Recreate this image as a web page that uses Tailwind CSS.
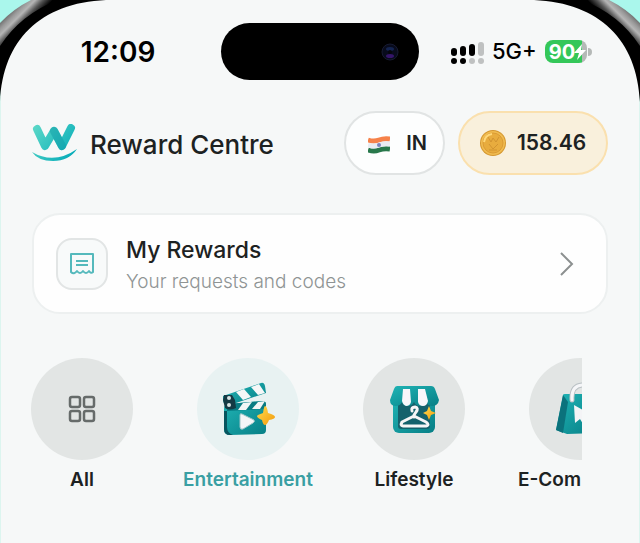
<!DOCTYPE html>
<html lang="en">
  <head>
    <meta charset="UTF-8" />
    <meta name="viewport" content="width=device-width, initial-scale=1.0" />
    <title>Reward Centre</title>
    <script src="https://cdn.jsdelivr.net/npm/@tailwindcss/browser@4"></script>
  </head>
  <body class="bg-[#f6f8f8] font-['Inter',sans-serif] text-[#1d2222]">
    <!-- shared shapes -->
    <svg class="absolute size-0" aria-hidden="true">
      <defs>
        <linearGradient id="metal" gradientUnits="userSpaceOnUse" x1="12" y1="9" x2="28" y2="25">
          <stop offset="0" stop-color="#666" />
          <stop offset=".25" stop-color="#999" />
          <stop offset=".45" stop-color="#b5b5b5" />
          <stop offset=".7" stop-color="#555" />
          <stop offset="1" stop-color="#000" />
        </linearGradient>
        <linearGradient id="teal" x1="0" y1="0" x2="1" y2="1">
          <stop offset="0" stop-color="#20b4b5" />
          <stop offset="1" stop-color="#077f86" />
        </linearGradient>
        <linearGradient id="gold" x1="0" y1="0" x2="1" y2="1">
          <stop offset="0" stop-color="#ffdc4e" />
          <stop offset="1" stop-color="#f29a0c" />
        </linearGradient>
        <g id="corner">
          <path d="M0 0H106C40 3 3 40 0 102Z" fill="#000" />
          <path d="M0 0H58Q21 14 0 46Z" fill="url(#metal)" />
          <path d="M0 0H31Q13 9 0 23Z" fill="#aaf7ec" />
        </g>
      </defs>
    </svg>

    <main class="relative min-h-lvh border-x border-[#dcf5ef]">
      <!-- phone frame corners -->
      <svg class="absolute -left-px top-0" width="106" height="102" aria-hidden="true"><use href="#corner" /></svg>
      <svg class="absolute -right-px top-0 -scale-x-100" width="106" height="102" aria-hidden="true"><use href="#corner" /></svg>

      <!-- status bar -->
      <div class="relative grid grid-cols-[1fr_198px_1fr] items-center pt-[23px]">
        <p class="pl-3.5 text-center text-[28px] leading-8 font-semibold text-black">12:09</p>
        <div class="flex h-[57px] items-center justify-end rounded-full bg-black pr-5">
          <svg width="18" height="18" viewBox="0 0 18 18" aria-hidden="true">
            <circle cx="9" cy="9" r="8" fill="#080b1c" stroke="#171b32" />
            <ellipse cx="9" cy="6" rx="4" ry="2" fill="#142450" />
            <circle cx="9" cy="9" r="2" fill="#05060c" />
            <ellipse cx="9" cy="13" rx="4" ry="2" fill="#35156a" />
          </svg>
        </div>
        <div class="flex items-center gap-2 pl-[31px]">
          <svg width="34" height="24" viewBox="0 0 34 24" aria-label="Signal">
            <g fill="#000">
              <rect x="1" y="8" width="6" height="8" rx="3" />
              <rect x="10" y="6" width="6" height="10" rx="3" />
              <rect x="19" y="4" width="6" height="12" rx="3" />
              <circle cx="4" cy="21" r="3" />
              <circle cx="13" cy="21" r="3" />
            </g>
            <g fill="#bfc1c1">
              <rect x="28" y="2" width="6" height="14" rx="3" />
              <circle cx="22" cy="21" r="3" />
              <circle cx="31" cy="21" r="3" />
            </g>
          </svg>
          <span class="text-[22px] font-medium text-black">5G+</span>
          <div class="flex items-center">
            <div class="flex h-[23px] w-[42px] items-center rounded-lg bg-linear-to-r from-[#34c759] from-88% to-[#b5b9b7] to-88% pl-1 text-xl font-bold text-white">
              90
              <svg class="-ml-px shrink-0" width="12" height="16" viewBox="0 0 12 16" aria-hidden="true"><path d="M8 0L0 9H5L3 16L12 6H7Z" fill="#fff" /></svg>
            </div>
            <div class="ml-px h-2 w-1 rounded-r-full bg-[#b5b9b7]"></div>
          </div>
        </div>
      </div>

      <!-- header -->
      <header class="flex items-center px-[31px] pt-[31px]">
        <svg width="46" height="38" viewBox="0 0 46 38" class="shrink-0" aria-hidden="true">
          <defs>
            <linearGradient id="wave" gradientUnits="userSpaceOnUse" x1="0" y1="0" x2="44" y2="34">
              <stop offset="0" stop-color="#5fdac8" />
              <stop offset="1" stop-color="#00a9b8" />
            </linearGradient>
          </defs>
          <g fill="none" stroke="url(#wave)" stroke-width="8" stroke-linecap="round" stroke-linejoin="round">
            <path d="M5 5L13 22L22 7L30 22L39 4" />
            <path d="M22 7L30 22" stroke="#0e98a5" stroke-opacity=".45" />
          </g>
          <path d="M0 28Q22 41 45 25Q37 37 21 37Q6 37 0 28Z" fill="url(#wave)" />
        </svg>
        <h1 class="ml-3 pt-1 text-[26px] leading-8 font-medium whitespace-nowrap">Reward Centre</h1>
        <button class="ml-auto flex h-16 w-[101px] items-center justify-end gap-4 rounded-full border-2 border-[#e1e4e4] bg-[#fdfefe] pr-4 text-xl font-semibold">
          <svg width="22" height="18" viewBox="0 0 22 18" class="mt-1 shrink-0" aria-label="India">
            <g fill="none" stroke-width="5">
              <path d="M0 4Q6 6 11 4T22 3" stroke="#f6824a" />
              <path d="M0 14Q6 16 11 14T22 13" stroke="#28784b" />
              <path d="M0 9Q6 11 11 9T22 8" stroke="#e9ecf2" />
            </g>
            <circle cx="11" cy="9" r="2" fill="#7b83bc" />
          </svg>
          IN
        </button>
        <button class="ml-[13px] flex h-16 w-[150px] items-center justify-center gap-[10px] rounded-full border-2 border-[#fae0ae] bg-[#f9f0dc] text-[21px] font-semibold">
          <svg width="27" height="27" viewBox="0 0 27 27" class="shrink-0" aria-hidden="true">
            <circle cx="13" cy="13" r="13" fill="#d4962e" />
            <circle cx="13" cy="13" r="12" fill="#f0bb50" />
            <circle cx="13" cy="13" r="10" fill="#e8ac3e" stroke="#db9b34" />
            <path d="M8 7L11 12L13 8L16 12L19 7M9 14L13 19L18 14M9 20H17" fill="none" stroke="#d29431" stroke-width="1" />
            <path d="M4 12Q5 5 12 4" fill="none" stroke="#ffd879" stroke-width="2" />
          </svg>
          158.46
        </button>
      </header>

      <!-- my rewards -->
      <a href="#" class="mx-[31px] mt-[38px] flex h-[101px] items-center rounded-[28px] border-2 border-[#edf0f0] bg-[#fefefe] pr-[30px] pl-[22px]">
        <div class="flex size-[52px] shrink-0 items-center justify-center rounded-2xl border-2 border-[#e2e5e5] bg-[#f8fafa]">
          <svg width="24" height="22" viewBox="0 0 24 22" fill="none" stroke="#55b9bc" stroke-width="2" stroke-linejoin="round" aria-hidden="true">
            <path d="M1 19V1H23V19Q21 21 19 18Q16 22 13 18Q10 22 7 18Q4 22 1 19Z" />
            <path d="M6 8H18M6 12H18" />
          </svg>
        </div>
        <div class="ml-[18px] pt-1 whitespace-nowrap">
          <h2 class="text-[23px] leading-8 font-medium">My Rewards</h2>
          <p class="text-[19px] leading-8 font-light text-[#8f9494]">Your requests and codes</p>
        </div>
        <svg class="ml-auto shrink-0" width="20" height="24" viewBox="0 0 20 24" fill="none" stroke="#8c9090" stroke-width="2" aria-hidden="true">
          <path d="M5 1L16 12L5 23" />
        </svg>
      </a>

      <!-- categories -->
      <nav class="mt-11 mr-[57px] ml-[15px] flex gap-[34px] overflow-hidden pb-12 text-[19px] leading-6 font-semibold whitespace-nowrap">
        <button class="flex w-[132px] shrink-0 flex-col items-center gap-2">
          <span class="flex size-[102px] items-center justify-center rounded-full bg-[#e2e5e4]">
            <svg width="28" height="28" viewBox="0 0 28 28" fill="none" stroke="#666b6a" stroke-width="2.5" aria-hidden="true">
              <rect x="2" y="2" width="10" height="10" rx="2" />
              <rect x="16" y="2" width="10" height="10" rx="2" />
              <rect x="2" y="16" width="10" height="10" rx="2" />
              <rect x="16" y="16" width="10" height="10" rx="2" />
            </svg>
          </span>
          All
        </button>
        <button class="flex w-[132px] shrink-0 flex-col items-center gap-2 text-[#399fa3]">
          <span class="flex size-[102px] items-center justify-center rounded-full bg-[#e8f2f2]">
            <svg width="54" height="54" viewBox="0 0 54 54" aria-hidden="true">
              <path d="M3 27Q3 22 7 22L42 19Q45 19 45 23V48Q45 52 41 52L9 53Q3 53 3 47Z" fill="url(#teal)" />
              <path d="M3 29V47Q3 53 9 53L12 53Q6 51 6 45V29Z" fill="#07555f" />
              <path d="M7 22L42 19Q45 19 45 23V27L6 29Z" fill="#087b82" />
              <path d="M22 21L31 20L25 28H17ZM37 20L44 19L39 27H31Z" fill="#f2f5f5" />
              <path d="M2 14L40 1Q43 0 44 4L45 11L9 23Q2 24 2 17Z" fill="url(#teal)" />
              <path d="M15 10L23 7L30 15L22 18ZM30 5L38 2L44 11L37 13Z" fill="#f5f7f7" />
              <path d="M3 13L11 13L14 18L15 26Q8 29 4 26L2 18Z" fill="#143a44" />
              <circle cx="8" cy="16" r="2" fill="#d8e4e4" />
              <circle cx="8" cy="23" r="2" fill="#d8e4e4" />
              <path d="M19 33Q19 31 21 32L33 38Q34 40 32 41L22 47Q19 48 19 45Z" fill="#f5f6f7" stroke="#9fc5c8" />
              <path d="M44 24Q46 24 47 31Q54 33 54 35Q54 37 48 38Q46 43 44 43Q42 43 41 38Q36 36 36 34Q36 33 42 31Q43 24 44 24Z" fill="url(#gold)" />
            </svg>
          </span>
          Entertainment
        </button>
        <button class="flex w-[132px] shrink-0 flex-col items-center gap-2">
          <span class="flex size-[102px] items-center justify-center rounded-full bg-[#e2e5e4]">
            <svg width="50" height="50" viewBox="0 0 50 50" aria-hidden="true">
              <rect x="4" y="12" width="42" height="37" rx="6" fill="url(#teal)" />
              <rect x="9" y="17" width="32" height="28" rx="3" fill="#14616c" />
              <path d="M8 2H42Q45 2 46 5L50 16Q49 22 43 22Q39 22 37 18Q35 22 31 22Q27 22 25 18Q23 22 19 22Q14 22 13 18Q11 22 7 22Q1 22 1 16L5 5Q6 2 8 2Z" fill="url(#teal)" />
              <path d="M14 5H21L22 18Q21 22 17 22Q14 21 13 17ZM29 5H36L39 17Q38 22 34 22Q30 22 29 18Z" fill="#f7f6fa" />
              <path d="M23 27Q22 23 26 23Q30 24 27 28L25 31V33M25 32L13 38Q11 42 14 42H37Q41 41 37 38Z" fill="none" stroke="#f5f5f6" stroke-width="3" stroke-linecap="round" stroke-linejoin="round" />
              <path d="M40 22L42 27L47 29L42 31L40 36L38 31L34 29L38 27Z" fill="url(#gold)" />
            </svg>
          </span>
          Lifestyle
        </button>
        <button class="flex w-[132px] shrink-0 flex-col items-center gap-2">
          <span class="flex size-[102px] items-center justify-center rounded-full bg-[#e2e5e4]">
            <svg width="50" height="54" viewBox="0 0 50 54" aria-hidden="true">
              <path d="M8 13Q8 12 10 12H40L43 48Q43 50 41 51L12 52L1 48Z" fill="url(#teal)" />
              <path d="M8 13L13 20L8 51L1 48Z" fill="#0b727c" />
              <path d="M17 18Q16 4 27 3T34 17" fill="none" stroke="#b9c0c4" stroke-width="5" stroke-linecap="round" />
              <path d="M17 18Q16 4 27 3T34 17" fill="none" stroke="#f5f6f8" stroke-width="3" stroke-linecap="round" />
              <path d="M19 23L35 32L29 35L32 41L28 42L25 37L20 41Z" fill="#f4f4f6" />
            </svg>
          </span>
          <span class="self-start pl-1">E-Com</span>
        </button>
      </nav>
    </main>
  </body>
</html>
